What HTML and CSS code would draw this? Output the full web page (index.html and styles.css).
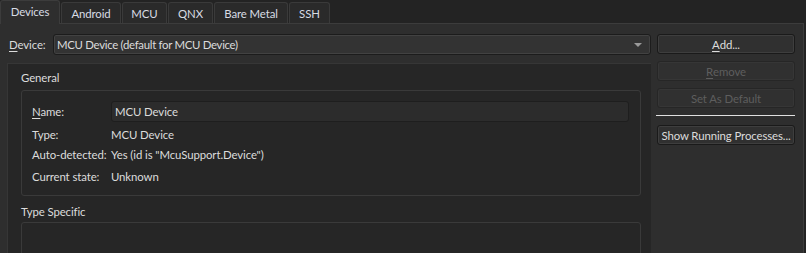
FILE: index.html
```html
<!DOCTYPE html>
<html>
<head>
<meta charset="utf-8">
<link rel="stylesheet" href="styles.css">
</head>
<body>
<div class="tabbar">
  <div class="tab active">Devices</div>
  <div class="tab w-android">Android</div>
  <div class="tab w-mcu">MCU</div>
  <div class="tab w-qnx">QNX</div>
  <div class="tab w-bare">Bare Metal</div>
  <div class="tab w-ssh">SSH</div>
</div>
<div class="pane">
  <div class="main">
    <div class="device-row">
      <span class="label"><u>D</u>evice:</span>
      <div class="combo">
        <span class="combo-text">MCU Device (default for MCU Device)</span>
        <span class="arrow"></span>
      </div>
    </div>
    <div class="scroll">
      <div class="section-title">General</div>
      <div class="group general">
        <div class="row name-row">
          <span class="key"><u>N</u>ame:</span>
          <div class="field">MCU Device</div>
        </div>
        <div class="row"><span class="key">Type:</span><span class="val">MCU Device</span></div>
        <div class="row"><span class="key">Auto-detected:</span><span class="val">Yes (id is "McuSupport.Device")</span></div>
        <div class="row state"><span class="key">Current state:</span><span class="val">Unknown</span></div>
      </div>
      <div class="section-title ts">Type Specific</div>
      <div class="group specific"></div>
    </div>
  </div>
  <div class="side">
    <div class="btn"><u>A</u>dd...</div>
    <div class="btn disabled"><u>R</u>emove</div>
    <div class="btn disabled">Set As Default</div>
    <div class="sep"></div>
    <div class="btn">Show Running Processes...</div>
  </div>
</div>
</body>
</html>
```
FILE: styles.css
```css
html, body {
  margin: 0;
  padding: 0;
  background: #232323;
  height: 253px;
  overflow: hidden;
  font-family: Lato, "Open Sans", sans-serif;
  font-size: 11.4px;
  letter-spacing: -0.1px;
  color: #dcdcdc;
}
u { text-decoration: underline; text-underline-offset: 2px; }

.tabbar {
  display: flex;
  height: 23px;
  align-items: flex-end;
  box-sizing: border-box;
}
.tab {
  height: 21px;
  box-sizing: border-box;
  margin-right: 1px;
  border: 1px solid #3a3a3a;
  border-bottom: none;
  border-radius: 3px 3px 0 0;
  background: #2a2a2a;
  display: flex;
  align-items: center;
  justify-content: center;
  color: #d8dce4;
  padding-top: 1px;
}
.tab.active {
  height: 24px;
  width: 60px;
  margin-bottom: -1px;
  background: #2e2e2e;
  border-color: #3c3c3c;
  position: relative;
  z-index: 1;
  padding-top: 0;
  padding-bottom: 2px;
  margin-right: 1px;
}
.w-android { width: 60px; }
.w-mcu { width: 45px; }
.w-qnx { width: 45px; }
.w-bare { width: 74px; }
.w-ssh { width: 41px; }

.pane {
  display: flex;
  background: #2e2e2e;
  border-top: 1px solid #3c3c3c;
  border-right: 1px solid #3c3c3c;
  margin-right: 2px;
  height: 230px;
  box-sizing: border-box;
}
.main {
  width: 651px;
  display: flex;
  flex-direction: column;
}
.device-row {
  display: flex;
  align-items: center;
  padding: 10px 0 0 9px;
  height: 21px;
}
.label { width: 44px; }
.combo {
  flex: 1;
  height: 21px;
  box-sizing: border-box;
  border: 1px solid #1c1c1c;
  box-shadow: inset 0 0 0 1px #424242;
  border-radius: 3px;
  background: #333333;
  display: flex;
  align-items: center;
  justify-content: space-between;
  padding: 0 8px 0 3px;
}
.combo-text { letter-spacing: -0.3px; }
.arrow {
  width: 0; height: 0;
  border-left: 4px solid transparent;
  border-right: 4px solid transparent;
  border-top: 4px solid #9a9a9a;
}
.scroll {
  margin: 8px 0 0 7px;
  flex: 1;
  min-height: 0;
  overflow: hidden;
  background: #262626;
  border-left: 1px solid #363636;
  border-top: 1px solid #363636;
  padding: 0 10px 0 13px;
}
.section-title {
  padding-top: 7px;
  height: 20px;
  box-sizing: border-box;
}
.section-title.ts { padding-top: 9px; height: 20px; }
.group {
  border: 1px solid #3a3a3a;
  border-radius: 3px;
  margin-top: 6px;
}
.general {
  height: 106px;
  box-sizing: border-box;
  padding: 9px 11px 0 10px;
}
.specific { height: 40px; margin-top: 6px; }
.row {
  display: flex;
  align-items: center;
  height: 20px;
  white-space: nowrap;
}
.name-row { height: 22px; margin-bottom: 2px; }
.row.state { margin-top: 2px; }
.key { width: 79px; flex: none; }
.field {
  flex: 1;
  height: 21px;
  box-sizing: border-box;
  background: #2c2c2c;
  border: 1px solid #1e1e1e;
  border-radius: 3px;
  display: flex;
  align-items: center;
  padding-left: 3px;
}
.side {
  width: 138px;
  margin-left: 6px;
  padding-top: 10px;
  display: flex;
  flex-direction: column;
}
.btn {
  height: 20px;
  box-sizing: border-box;
  border: 1px solid #1a1a1a;
  box-shadow: inset 0 0 0 1px #3e3e3e;
  border-radius: 3px;
  background: #303030;
  display: flex;
  align-items: center;
  justify-content: center;
  margin-bottom: 7px;
  white-space: nowrap;
}
.btn.disabled {
  color: #5e5e5e;
  border-color: #262626;
  box-shadow: inset 0 0 0 1px #363636;
}
.sep {
  height: 1px;
  background: #e0e0e0;
  margin: 0 0 9px -1px;
}
```
